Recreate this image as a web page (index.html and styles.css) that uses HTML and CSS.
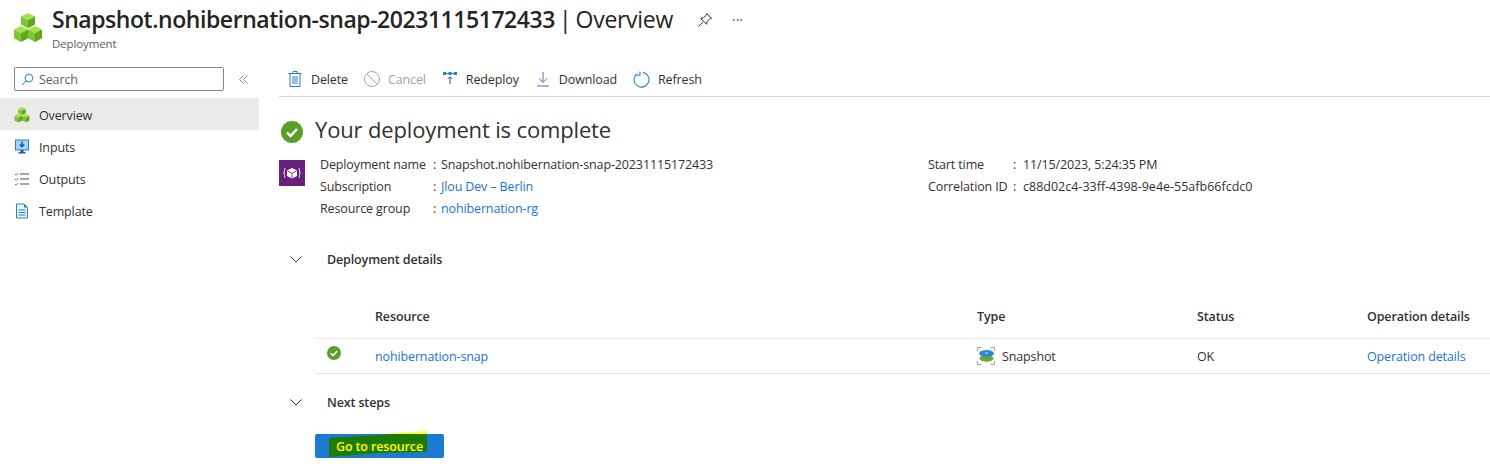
FILE: index.html
```html
<!DOCTYPE html>
<html lang="en">
<head>
<meta charset="utf-8">
<title>Overview</title>
<link rel="stylesheet" href="styles.css">
</head>
<body>
<header class="page-header">
  <svg class="hdr-icon" viewBox="0 0 28 30"><g id="cubes"><path fill="#9fe34b" d="M14 0l7 3.6-7 3.6-7-3.6z"/><path fill="#7cc52e" d="M7 3.6l7 3.6v8l-7-3.6z"/><path fill="#5fa61e" d="M21 3.6l-7 3.6v8l7-3.6z"/><path fill="#9fe34b" d="M7 13l7 3.6-7 3.6-7-3.6z"/><path fill="#7cc52e" d="M0 16.6l7 3.6V29l-7-3.8z"/><path fill="#5fa61e" d="M14 16.6l-7 3.6V29l7-3.8z"/><path fill="#9fe34b" d="M21 13l7 3.6-7 3.6-7-3.6z"/><path fill="#7cc52e" d="M14 16.6l7 3.6V29l-7-3.8z"/><path fill="#5fa61e" d="M28 16.6l-7 3.6V29l7-3.8z"/></g></svg>
  <div class="hdr-text">
    <div class="hdr-title-row">
      <h1 class="hdr-title"><b>Snapshot.nohibernation-snap-20231115172433</b> | Overview</h1>
      <svg class="pin" viewBox="0 0 16 16"><path fill="none" stroke="#323130" d="M9.8 1.5l4.7 4.7-1.6.6-2.9 2.9-.4 2.6-5.9-5.9 2.6-.4 2.9-2.9zM5.800 10.200L1.500 14.500"/></svg>
      <span class="more">···</span>
    </div>
    <div class="hdr-sub">Deployment</div>
  </div>
</header>
<div class="layout">
  <aside class="sidebar">
    <div class="search-row">
      <div class="search">
        <svg class="search-ico" viewBox="0 0 14 14"><circle cx="8.500" cy="5.500" r="4.200" fill="none" stroke="#0f78d4"/><path d="M5.500 8.500L1 13" stroke="#0f78d4" fill="none"/></svg>
        <span>Search</span>
      </div>
      <svg class="collapse" viewBox="0 0 9 9"><path d="M4.500.500L.5 4.500l4 4M8.500.500l-4 4 4 4" fill="none" stroke="#8a8886"/></svg>
    </div>
    <nav class="nav">
      <div class="nav-item active">
        <svg class="nav-ico" viewBox="0 0 28 30"><use href="#cubes"/></svg>Overview
      </div>
      <div class="nav-item">
        <svg class="nav-ico" viewBox="0 0 16 16"><rect x="1.500" y="1" width="13" height="10" fill="#a9d3f2" stroke="#2a7fcb"/><path d="M8 2.500v5M5.800 5.500L8 7.800l2.200-2.300" fill="none" stroke="#0a5ea8" stroke-width="1.400"/><path d="M6.500 11h3v2h2v1.500h-7V13h2z" fill="#1f5f9f"/></svg>Inputs
      </div>
      <div class="nav-item">
        <svg class="nav-ico" viewBox="0 0 16 16"><path d="M1 3l1.200 1.200L4.200 2M1 8l1.200 1.200L4.200 7M1 13l1.200 1.200L4.200 12" fill="none" stroke="#3a86d0"/><path d="M6 3h9M6 8h9M6 13h9" stroke="#8a8886" stroke-width="1.300"/></svg>Outputs
      </div>
      <div class="nav-item">
        <svg class="nav-ico" viewBox="0 0 16 16"><path d="M2.500 1h7.500l3.500 3.500V15h-11z" fill="#e8f3fc" stroke="#2a7fcb"/><path d="M10 1v3.500h3.500z" fill="#2a7fcb"/><path d="M4.500 7h7M4.500 9.500h7M4.500 12h7" stroke="#2a7fcb"/></svg>Template
      </div>
    </nav>
  </aside>
  <main class="main">
    <div class="toolbar">
      <div class="tool">
        <svg class="tool-ico" viewBox="0 0 16 16"><path d="M1.500 2.500h13M6 2.500V.5h4v2M3 2.500v13h10v-13M6 5v8M8 5v8M10 5v8" fill="none" stroke="#2a7fcb"/></svg>Delete
      </div>
      <div class="tool disabled">
        <svg class="tool-ico" viewBox="0 0 16 16"><circle cx="8" cy="8" r="7.500" fill="none" stroke="#a8a6a4"/><path d="M2.800 2.800l10.400 10.400" stroke="#a8a6a4"/></svg>Cancel
      </div>
      <div class="tool">
        <svg class="tool-ico" viewBox="0 0 16 16"><path d="M1 1h3v3H1zM6.500 1h3v3h-3zM12 1h3v3h-3z" fill="#1f7ed6"/><path d="M4 2.500h8" stroke="#1f7ed6"/><path d="M8 13V6M5.800 8L8 5.800 10.200 8" fill="none" stroke="#1f5f9f"/></svg>Redeploy
      </div>
      <div class="tool">
        <svg class="tool-ico" viewBox="0 0 16 16"><path d="M8 1v10M4 7.500l4 4 4-4M2 15h12" fill="none" stroke="#7a5fa8"/></svg>Download
      </div>
      <div class="tool">
        <svg class="tool-ico refresh" viewBox="0 0 16 16"><path d="M9.500 1.300A7 7 0 1 1 3.500 2.800" fill="none" stroke="#2a7fcb"/><path d="M6.500 .5v3.500H3" fill="none" stroke="#2a7fcb"/></svg>Refresh
      </div>
    </div>
    <div class="status">
      <svg class="status-ico" viewBox="0 0 22 22"><circle cx="11" cy="11" r="11" fill="#5a9f28"/><path d="M6 11.500l3.500 3.500L16 8" fill="none" stroke="#fff" stroke-width="2.400"/></svg>
      <h2 class="status-title">Your deployment is complete</h2>
    </div>
    <section class="info">
      <svg class="info-ico" viewBox="0 0 26 26"><rect width="26" height="26" fill="#68217a"/><path d="M13 8l5 2.500v5.500l-5 2.500-5-2.500v-5.500z" fill="#fff"/><path d="M8.500 11l4.500 2.300 4.500-2.300M13 13.300v5" fill="none" stroke="#68217a" stroke-width=".8"/><path d="M6.500 8.500c-1.500 0-1 1.500-1 3s-1 1.500-1 1.500 1 0 1 1.500-.5 3 1 3M19.500 8.500c1.500 0 1 1.500 1 3s1 1.500 1 1.500-1 0-1 1.500.5 3-1 3" fill="none" stroke="#fff" stroke-width=".9"/></svg>
      <dl class="facts facts-left">
        <dt>Deployment name</dt><dd>Snapshot.nohibernation-snap-20231115172433</dd>
        <dt>Subscription</dt><dd><a>Jlou Dev – Berlin</a></dd>
        <dt>Resource group</dt><dd><a>nohibernation-rg</a></dd>
      </dl>
      <dl class="facts facts-right">
        <dt>Start time</dt><dd>11/15/2023, 5:24:35 PM</dd>
        <dt>Correlation ID</dt><dd class="corr">c88d02c4-33ff-4398-9e4e-55afb66fcdc0</dd>
      </dl>
    </section>
    <div class="section-head details-head">
      <svg class="chev" viewBox="0 0 12 7"><path d="M.5.500L6 6l5.500-5.500" fill="none" stroke="#323130"/></svg>
      <span>Deployment details</span>
    </div>
    <div class="table">
      <div class="row head">
        <div></div><div>Resource</div><div>Type</div><div>Status</div><div>Operation details</div>
      </div>
      <div class="row body">
        <div><svg class="row-check" viewBox="0 0 14 14"><circle cx="7" cy="7" r="7" fill="#5a9f28"/><path d="M3.800 7.300L6 9.500 10.300 5" fill="none" stroke="#fff" stroke-width="1.600"/></svg></div>
        <div><a>nohibernation-snap</a></div>
        <div class="type"><svg class="snap-ico" viewBox="0 0 18 18"><path d="M.5 4V.5h4M13.500 .5h4v3.500M17.500 14v3.500h-4M4.500 17.500H.5V14" fill="none" stroke="#a19f9d"/><ellipse cx="9.500" cy="11.500" rx="7" ry="3.200" fill="#6ea92f"/><ellipse cx="9.500" cy="6.500" rx="7.500" ry="3.500" fill="#2f86dc"/><path d="M8 6h3" stroke="#fff" stroke-width=".8"/></svg>Snapshot</div>
        <div>OK</div>
        <div><a>Operation details</a></div>
      </div>
    </div>
    <div class="section-head next-head">
      <svg class="chev" viewBox="0 0 12 7"><path d="M.5.500L6 6l5.500-5.500" fill="none" stroke="#323130"/></svg>
      <span>Next steps</span>
    </div>
    <div class="go">
      <svg class="marker" viewBox="0 0 98 26"><path d="M0 7L35 5 98 1V21L50 22 0 26z" fill="#1f7a00"/><path d="M51 3L75 1.500 98 0V3z" fill="#ffff3c"/></svg>
      <span class="go-label">Go to resource</span>
    </div>
  </main>
</div>
</body>
</html>
```
FILE: styles.css
```css
* { box-sizing: border-box; }
html, body { margin: 0; height: 471px; overflow: hidden; background: #fff; }
body { font-family: "Open Sans", "Noto Sans", sans-serif; font-size: 12.500px; color: #323130; letter-spacing: -.13px; }
a { color: #1a73d0; }
h1, h2, dl, dd { margin: 0; font-weight: 400; }

.page-header { display: flex; height: 62px; padding: 7px 0 0 14px; }
.hdr-icon { width: 28px; height: 30px; margin: 6px 10px 0 0; }
.hdr-title-row { display: flex; align-items: center; height: 24px; }
.hdr-title { font-size: 23px; letter-spacing: -.3px; word-spacing: -1.500px; line-height: 24px; color: #252423; white-space: nowrap; }
.hdr-title b { font-weight: 600; letter-spacing: -.45px; }
.pin { width: 16px; height: 16px; margin: 1px 0 0 24px; }
.more { margin-left: 19px; font-size: 14px; color: #605e5c; letter-spacing: 0; }
.hdr-sub { margin-top: 6px; font-size: 11.500px; color: #605e5c; line-height: 14px; }

.layout { display: flex; }
.sidebar { width: 259px; flex: none; }
.search-row { display: flex; align-items: flex-start; padding: 5px 0 0 14px; height: 36px; }
.search { width: 210px; height: 24px; border: 1px solid #8a8886; border-radius: 2px; display: flex; align-items: center; gap: 5px; padding-left: 6px; color: #605e5c; }
.search-ico { width: 13px; height: 13px; }
.collapse { width: 9px; height: 9px; margin: 8px 0 0 15px; }
.nav-item { height: 32px; display: flex; align-items: center; padding: 2px 0 0 14px; gap: 9px; }
.nav-item.active { background: #edebe9; }
.nav-ico { width: 16px; height: 16px; }

.main { flex: 1; margin-left: 20px; }
.toolbar { height: 35px; display: flex; align-items: center; border-bottom: 1px solid #d6d6d6; padding-left: 8px; }
.tool { display: flex; align-items: center; gap: 8px; margin-right: 16px; white-space: nowrap; }
.tool.disabled { color: #a19f9d; }
.tool-ico { width: 16px; height: 16px; }
.refresh { width: 17px; height: 17px; }

.status { display: flex; align-items: center; margin: 18px 0 0 2px; height: 28px; gap: 12px; }
.status-ico { width: 22px; height: 22px; margin-top: 6px; }
.status-title { font-size: 22px; line-height: 28px; letter-spacing: -.15px; color: #323130; }

.info { display: flex; margin-top: 10px; height: 66px; }
.info-ico { width: 26px; height: 26px; margin-top: 7px; flex: none; }
.facts { display: grid; grid-auto-rows: 22px; align-items: center; }
.facts-left { margin-left: 15px; grid-template-columns: 113px auto; width: 608px; }
.facts-right { grid-template-columns: 85px auto; }
.facts dd { padding-left: 8px; position: relative; }
.facts dd::before { content: ":"; position: absolute; left: 0; }
.facts-right dd { padding-left: 10px; }
.facts-right .corr { letter-spacing: 0; }

.section-head { display: flex; align-items: center; font-weight: 600; color: #323130; }
.chev { width: 12px; height: 7px; margin: 0 25px 0 11px; }
.details-head { margin-top: 30px; height: 20px; }

.table { margin: 32px 0 0 36px; }
.row { display: grid; grid-template-columns: 60px 602px 220px 170px 1fr; align-items: center; }
.row.head { height: 38px; padding-bottom: 6px; font-weight: 600; border-bottom: 1px solid #edebe9; }
.row.body { height: 35px; border-bottom: 1px solid #e4e4e4; }
.row-check { width: 14px; height: 14px; display: block; margin: -6px 0 0 12px; }
.type { display: flex; align-items: center; gap: 7px; }
.snap-ico { width: 18px; height: 18px; }

.next-head { margin-top: 18px; height: 20px; }
.go { position: relative; margin: 22px 0 0 36px; width: 129px; height: 24px; background: #1b7ad1; border-radius: 2px; display: flex; align-items: center; padding-left: 21px; }
.marker { position: absolute; left: 14px; top: -3px; width: 98px; height: 26px; }
.go-label { position: relative; color: #ffff00; white-space: nowrap; font-weight: 600; font-size: 12.500px; }
```
